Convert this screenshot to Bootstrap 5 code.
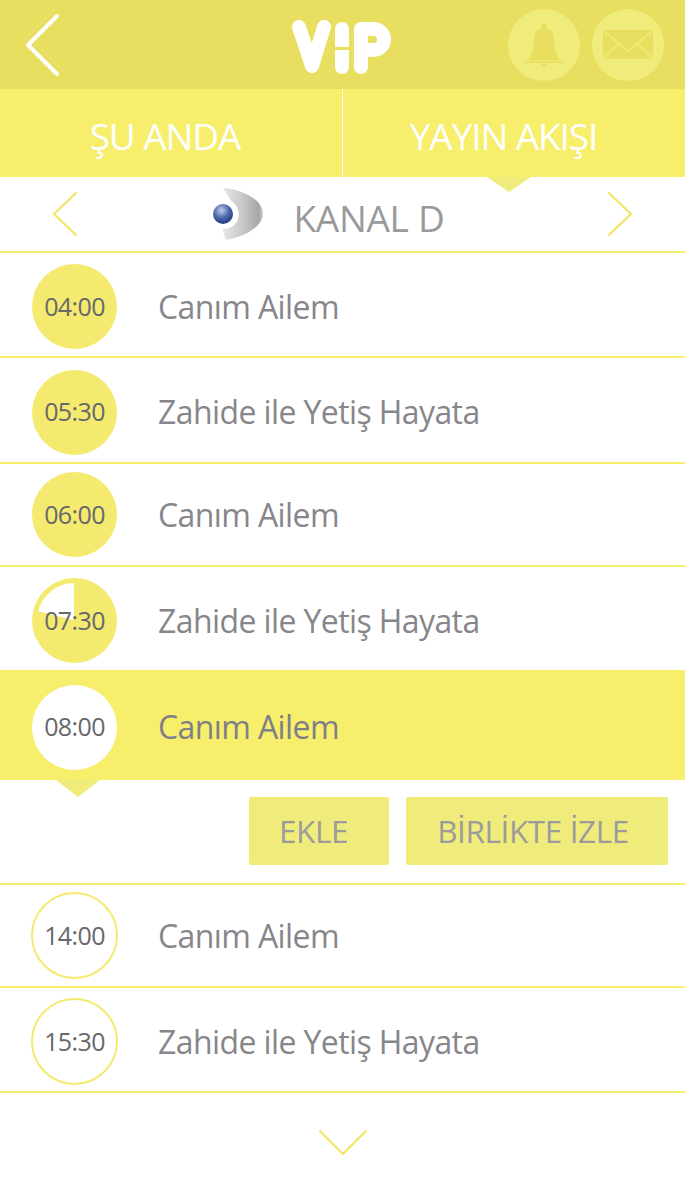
<!DOCTYPE html>
<html lang="tr">
<head>
<meta charset="utf-8">
<title>VIP</title>
<link href="https://cdn.jsdelivr.net/npm/bootstrap@5.3.0/dist/css/bootstrap.min.css" rel="stylesheet">
<style>
html,body{background:#fff;margin:0}
body{font-family:"Open Sans","Noto Sans",sans-serif;color:#87868a;width:685px;height:1181px;overflow:hidden}
.app-head{height:89px;background:#e8df60;padding:0 21px 0 25px}
.head-side{flex:1 1 0}
.head-icons{gap:12px}
.logo-mark{margin:6px 7px 0 0}
.round-ico{width:72px;height:72px;border-radius:50%;background:#f0ec7b}
.tabs-bar{height:88px;background:#f7ee6b}
.tab-cell{width:342px;color:#fff;font-size:37px;font-weight:400;letter-spacing:-1.1px;line-height:1;padding:4px 12px 0 0}
.tab-cell+.tab-cell{width:343px;border-left:1px solid #fff;padding-right:21px}
.tab-tip{top:100%;left:144px;width:0;height:0;border-left:22px solid transparent;border-right:22px solid transparent;border-top:15px solid #f0ec7b}
.channel-row{height:76px;border-bottom:2px solid #f7ee6b;padding:0 52px}
.channel-main{margin-right:28px}
.channel-name{font-size:37px;color:#9a9a9c;letter-spacing:-.3px;font-weight:400;margin-left:31px;line-height:1;padding-top:6px}
.prog-row{border-bottom:2px solid #f7ee6b;padding-left:32px}
.prog-title{font-size:32px;letter-spacing:-.6px;margin-left:41px;line-height:1;color:#87868a}
.time-disc{width:85px;height:85px;border-radius:50%;background:#f3ea6f;font-size:25px;letter-spacing:-.6px;color:#68676b;flex:none}
.time-open{background:#fff;border:2px solid #f3ea6f;width:87px;height:87px;margin:0 -1px}
.time-white{background:#fff}
.pie-wrap{width:85px;height:85px;background:#f3ea6f;border-radius:50%;flex:none}
.pie-wrap .time-disc{width:75px;height:75px;background:conic-gradient(#f3ea6f 0 79%,#fff 79% 100%)}
.row-plain{border-bottom:0}
.row-hi{background:#f7ee6b;border-bottom:0}
.hi-tip{top:100%;left:56px;width:0;height:0;border-left:22px solid transparent;border-right:22px solid transparent;border-top:17px solid #f0ec7b}
.row-hi .prog-title{color:#7f7f88}
.action-row{padding:17px 17px 0 0;gap:17px}
.act-btn{height:68px;background:#f0ec7b;border:0;border-radius:2px;color:#9b9b9c;font-size:31.500px;letter-spacing:-.4px;padding:0;line-height:1}
.act-add{width:140px;padding-right:11px}
.act-watch{width:262px;padding-right:8px}
.foot-row{height:88px;padding-top:12px}
.rh-103{height:103px}.rh-105{height:105px}.rh-106{height:106px}.rh-110{height:110px}
</style>
</head>
<body>
<header class="app-head d-flex align-items-center">
  <div class="head-side d-flex">
    <svg width="36" height="64" viewBox="0 0 36 64" fill="none"><path d="M32 3 3 32l29 29" stroke="#fff" stroke-width="4" stroke-linecap="round" stroke-linejoin="round"/></svg>
  </div>
  <svg class="logo-mark" role="img" aria-label="VIP" width="100" height="56" viewBox="0 0 100 56" fill="none" stroke="#fff" stroke-width="14" stroke-linecap="round" stroke-linejoin="round">
    <path d="M8 7 21 46 33 7"/>
    <path d="M44 9a7 7 0 0 1 14 0v18H44ZM44 30h14v17a7 7 0 0 1-14 0Z" fill="#fff" stroke="none"/>
    <path d="M70 47V9h12.500a10.500 10.500 0 0 1 0 21H72"/>
  </svg>
  <div class="head-side d-flex justify-content-end head-icons">
    <div class="round-ico d-flex align-items-center justify-content-center">
      <svg width="38" height="44" viewBox="0 0 38 44"><path d="M19 0c1.500 0 2.500 1 2.500 2.500V5c5.500 1.500 7.500 5.500 7.500 10.500 0 9 1.500 16.500 7 22H2c5.500-5.500 7-13 7-22C9 10.500 11 6.500 16.500 5V2.500C16.500 1 17.500 0 19 0Z" fill="#e8df60"/><rect y="38.500" width="38" height="1.500" fill="#e8df60"/><path d="M16 40.500h6a3 3 0 0 1-6 0Z" fill="#e8df60"/></svg>
    </div>
    <div class="round-ico d-flex align-items-center justify-content-center">
      <svg width="50" height="29" viewBox="0 0 50 29"><rect width="50" height="29" fill="#e8df60"/><path d="M1 1l24 20L49 1M1 28l14-14M49 28 35 14" stroke="#f0ec7b" stroke-width="1.500" fill="none"/></svg>
    </div>
  </div>
</header>
<nav class="tabs-bar d-flex position-relative">
  <div class="tab-cell d-flex align-items-center justify-content-center">ŞU ANDA</div>
  <div class="tab-cell d-flex align-items-center justify-content-center position-relative">YAYIN AKIŞI<div class="tab-tip position-absolute"></div></div>
</nav>
<section class="channel-row d-flex align-items-center justify-content-between">
  <svg width="26" height="46" viewBox="0 0 26 46" fill="none"><path d="M24 2 2 23l22 21" stroke="#f0e65c" stroke-width="2" stroke-linecap="round" stroke-linejoin="round"/></svg>
  <div class="channel-main d-flex align-items-center">
    <svg width="50" height="54" viewBox="0 0 50 54">
      <defs>
        <linearGradient id="g1" x1="0" y1="0" x2="1" y2="0"><stop offset="0" stop-color="#e8e8e8"/><stop offset=".5" stop-color="#c8c8c8"/><stop offset=".9" stop-color="#a6a6a6"/><stop offset="1" stop-color="#cfcfcf"/></linearGradient>
        <radialGradient id="g2" cx=".42" cy=".32" r=".75"><stop offset="0" stop-color="#c3cfe8"/><stop offset=".5" stop-color="#4c68b0"/><stop offset="1" stop-color="#1d3276"/></radialGradient>
      </defs>
      <path d="M10 1C28 2 50 12 50 27 50 40 30 50 13 53L9 42A15 15 0 0 0 18 14Z" fill="url(#g1)"/>
      <circle cx="10" cy="27" r="10" fill="url(#g2)"/>
    </svg>
    <span class="channel-name">KANAL D</span>
  </div>
  <svg width="26" height="46" viewBox="0 0 26 46" fill="none"><path d="M2 2l22 21L2 44" stroke="#f0e65c" stroke-width="2" stroke-linecap="round" stroke-linejoin="round"/></svg>
</section>
<main>
  <div class="prog-row d-flex align-items-center rh-105 pt-1"><div class="time-disc d-flex align-items-center justify-content-center">04:00</div><div class="prog-title">Canım Ailem</div></div>
  <div class="prog-row d-flex align-items-center rh-106 pt-1"><div class="time-disc d-flex align-items-center justify-content-center">05:30</div><div class="prog-title">Zahide ile Yetiş Hayata</div></div>
  <div class="prog-row d-flex align-items-center rh-103"><div class="time-disc d-flex align-items-center justify-content-center">06:00</div><div class="prog-title">Canım Ailem</div></div>
  <div class="prog-row row-plain d-flex align-items-center rh-103 pt-1"><div class="pie-wrap d-flex align-items-center justify-content-center"><div class="time-disc d-flex align-items-center justify-content-center">07:30</div></div><div class="prog-title">Zahide ile Yetiş Hayata</div></div>
  <div class="prog-row row-hi d-flex align-items-center position-relative rh-110 pt-1"><div class="time-disc time-white d-flex align-items-center justify-content-center">08:00</div><div class="prog-title">Canım Ailem</div><div class="hi-tip position-absolute"></div></div>
  <div class="prog-row action-row d-flex justify-content-end align-items-start rh-105">
    <button class="act-btn act-add btn">EKLE</button>
    <button class="act-btn act-watch btn">BİRLİKTE İZLE</button>
  </div>
  <div class="prog-row d-flex align-items-center rh-103"><div class="time-disc time-open d-flex align-items-center justify-content-center">14:00</div><div class="prog-title">Canım Ailem</div></div>
  <div class="prog-row d-flex align-items-center rh-105 pt-1"><div class="time-disc time-open d-flex align-items-center justify-content-center">15:30</div><div class="prog-title">Zahide ile Yetiş Hayata</div></div>
  <div class="foot-row d-flex justify-content-center align-items-center">
    <svg width="50" height="28" viewBox="0 0 50 28" fill="none"><path d="M2 2l23 23L48 2" stroke="#f0e65c" stroke-width="2" stroke-linecap="round" stroke-linejoin="round"/></svg>
  </div>
</main>
</body>
</html>
